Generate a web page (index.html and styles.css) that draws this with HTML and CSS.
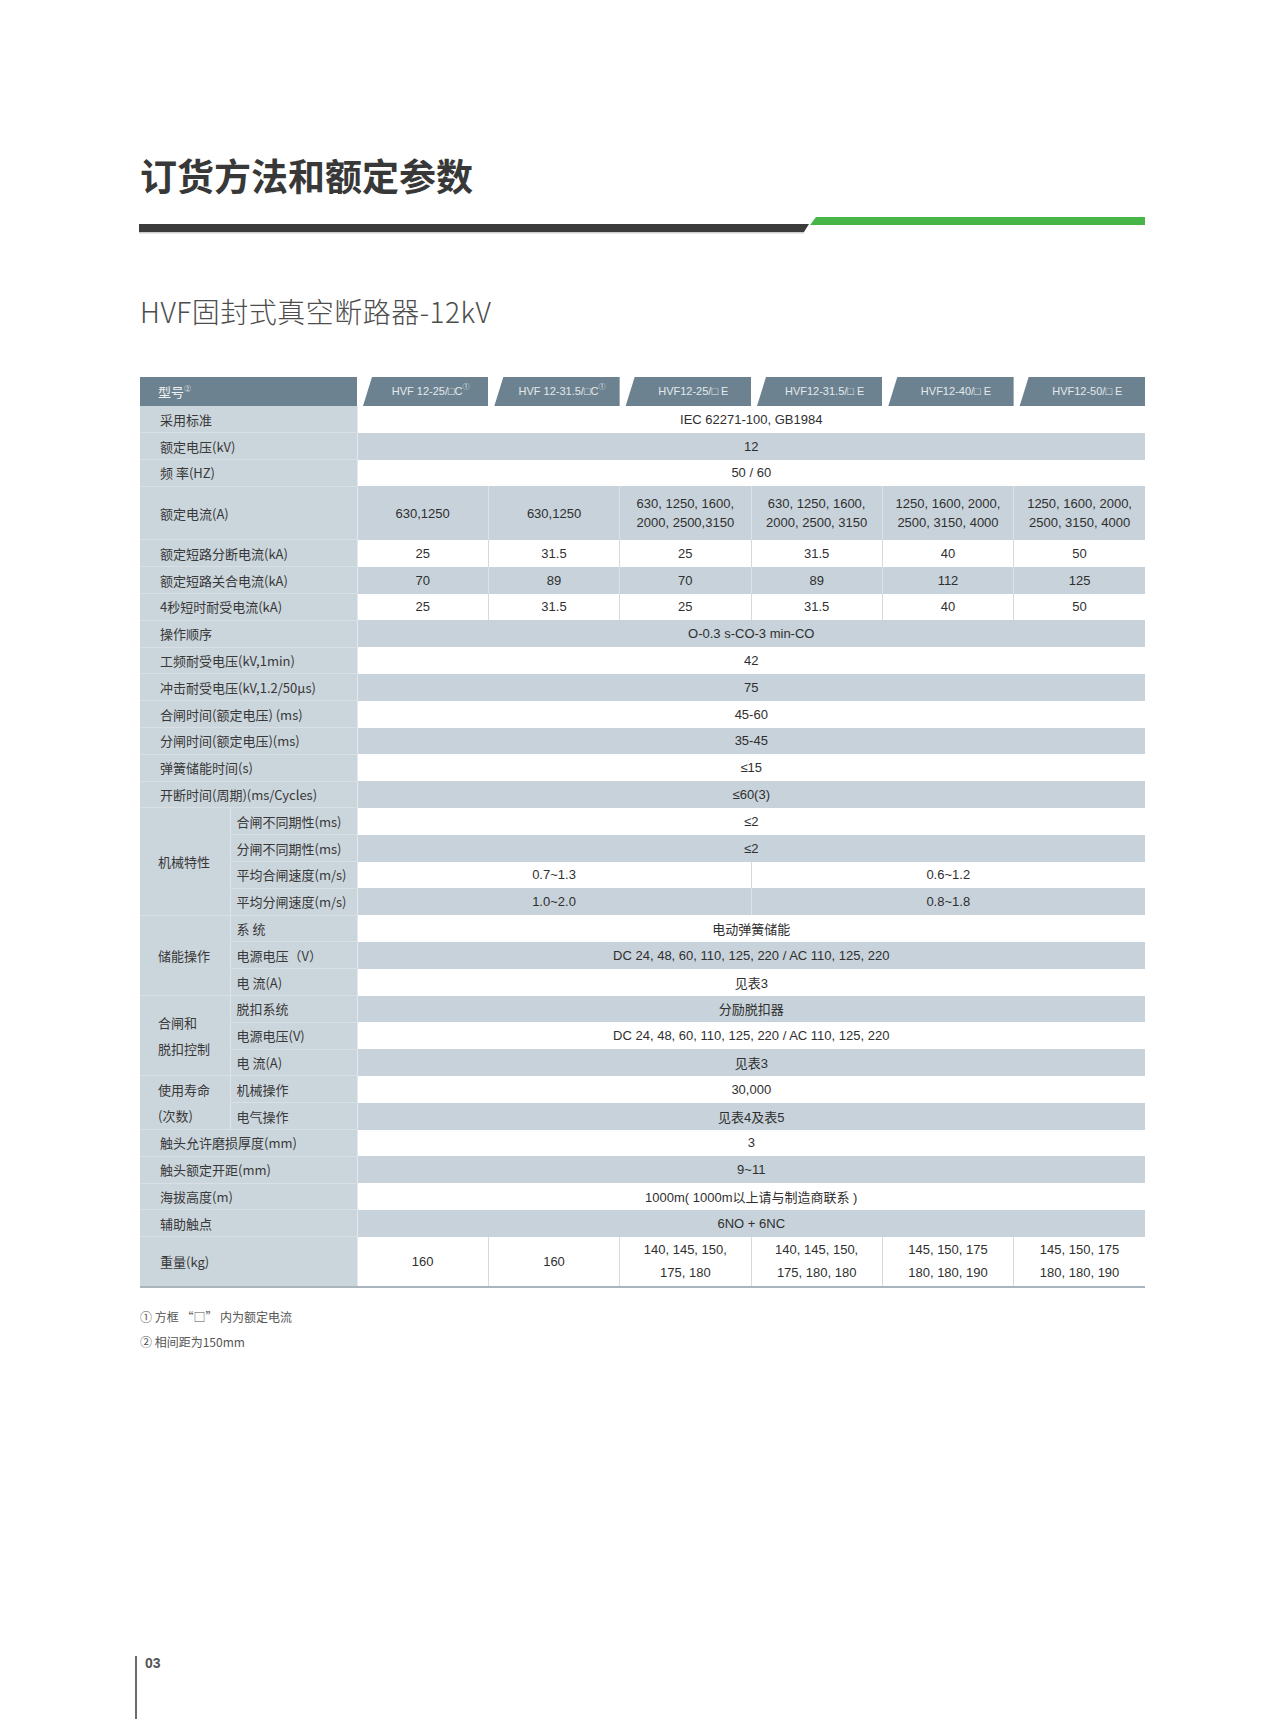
FILE: index.html
```html
<!DOCTYPE html>
<html lang="zh">
<head>
<meta charset="utf-8">
<title>订货方法和额定参数</title>
<link rel="stylesheet" href="styles.css">
</head>
<body>
<div class="page">
  <h1 class="title">订货方法和额定参数</h1>
  <svg class="rule" width="1006" height="22" viewBox="0 0 1006 22">
    <polygon points="0,11 670,11 665,19 0,19" fill="#3b3b3b"/>
    <rect x="0" y="19" width="665" height="1.5" fill="#cfcfcf"/>
    <polygon points="671,12 677,4 1006,4 1006,12" fill="#46b649"/>
  </svg>
  <h2 class="subtitle">HVF固封式真空断路器-12kV</h2>

  <div class="thead">
    <div class="th-label">型号<sup>②</sup></div>
    <div class="tab">HVF 12-25/□C<sup>①</sup></div>
    <div class="tab">HVF 12-31.5/□C<sup>①</sup></div>
    <div class="tab">HVF12-25/□ E</div>
    <div class="tab">HVF12-31.5/□ E</div>
    <div class="tab">HVF12-40/□ E</div>
    <div class="tab">HVF12-50/□ E</div>
  </div>

  <table class="spec">
    <colgroup>
      <col class="c-grp">
      <col class="c-sub">
      <col span="6" class="c-val">
    </colgroup>
    <tr class="w"><td class="lab" colspan="2">采用标准</td><td colspan="6">IEC 62271-100, GB1984</td></tr>
    <tr class="g"><td class="lab" colspan="2">额定电压(kV)</td><td colspan="6">12</td></tr>
    <tr class="w"><td class="lab" colspan="2">频 率(HZ)</td><td colspan="6">50 / 60</td></tr>
    <tr class="g dbl"><td class="lab" colspan="2">额定电流(A)</td>
      <td>630,1250</td><td class="sp">630,1250</td>
      <td class="sp two">630, 1250, 1600,<br>2000, 2500,3150</td>
      <td class="sp two">630, 1250, 1600,<br>2000, 2500, 3150</td>
      <td class="sp two">1250, 1600, 2000,<br>2500, 3150, 4000</td>
      <td class="sp two">1250, 1600, 2000,<br>2500, 3150, 4000</td></tr>
    <tr class="w"><td class="lab" colspan="2">额定短路分断电流(kA)</td>
      <td>25</td><td class="sp">31.5</td><td class="sp">25</td><td class="sp">31.5</td><td class="sp">40</td><td class="sp">50</td></tr>
    <tr class="g"><td class="lab" colspan="2">额定短路关合电流(kA)</td>
      <td>70</td><td class="sp">89</td><td class="sp">70</td><td class="sp">89</td><td class="sp">112</td><td class="sp">125</td></tr>
    <tr class="w"><td class="lab" colspan="2">4秒短时耐受电流(kA)</td>
      <td>25</td><td class="sp">31.5</td><td class="sp">25</td><td class="sp">31.5</td><td class="sp">40</td><td class="sp">50</td></tr>
    <tr class="g"><td class="lab" colspan="2">操作顺序</td><td colspan="6">O-0.3 s-CO-3 min-CO</td></tr>
    <tr class="w"><td class="lab" colspan="2">工频耐受电压(kV,1min)</td><td colspan="6">42</td></tr>
    <tr class="g"><td class="lab" colspan="2">冲击耐受电压(kV,1.2/50μs)</td><td colspan="6">75</td></tr>
    <tr class="w"><td class="lab" colspan="2">合闸时间(额定电压) (ms)</td><td colspan="6">45-60</td></tr>
    <tr class="g"><td class="lab" colspan="2">分闸时间(额定电压)(ms)</td><td colspan="6">35-45</td></tr>
    <tr class="w"><td class="lab" colspan="2">弹簧储能时间(s)</td><td colspan="6">≤15</td></tr>
    <tr class="g"><td class="lab" colspan="2">开断时间(周期)(ms/Cycles)</td><td colspan="6">≤60(3)</td></tr>

    <tr class="w"><td class="grp" rowspan="4">机械特性</td><td class="sub">合闸不同期性(ms)</td><td colspan="6">≤2</td></tr>
    <tr class="g"><td class="sub">分闸不同期性(ms)</td><td colspan="6">≤2</td></tr>
    <tr class="w"><td class="sub">平均合闸速度(m/s)</td><td colspan="3">0.7~1.3</td><td class="sp" colspan="3">0.6~1.2</td></tr>
    <tr class="g"><td class="sub">平均分闸速度(m/s)</td><td colspan="3">1.0~2.0</td><td class="sp" colspan="3">0.8~1.8</td></tr>

    <tr class="w"><td class="grp" rowspan="3">储能操作</td><td class="sub">系 统</td><td colspan="6">电动弹簧储能</td></tr>
    <tr class="g"><td class="sub">电源电压（V）</td><td colspan="6">DC 24, 48, 60, 110, 125, 220 / AC 110, 125, 220</td></tr>
    <tr class="w"><td class="sub">电 流(A)</td><td colspan="6">见表3</td></tr>

    <tr class="g"><td class="grp two-line" rowspan="3">合闸和<br>脱扣控制</td><td class="sub">脱扣系统</td><td colspan="6">分励脱扣器</td></tr>
    <tr class="w"><td class="sub">电源电压(V)</td><td colspan="6">DC 24, 48, 60, 110, 125, 220 / AC 110, 125, 220</td></tr>
    <tr class="g"><td class="sub">电 流(A)</td><td colspan="6">见表3</td></tr>

    <tr class="w"><td class="grp two-line" rowspan="2">使用寿命<br>(次数)</td><td class="sub">机械操作</td><td colspan="6">30,000</td></tr>
    <tr class="g"><td class="sub">电气操作</td><td colspan="6">见表4及表5</td></tr>

    <tr class="w"><td class="lab" colspan="2">触头允许磨损厚度(mm)</td><td colspan="6">3</td></tr>
    <tr class="g"><td class="lab" colspan="2">触头额定开距(mm)</td><td colspan="6">9~11</td></tr>
    <tr class="w"><td class="lab" colspan="2">海拔高度(m)</td><td colspan="6">1000m( 1000m以上请与制造商联系 )</td></tr>
    <tr class="g"><td class="lab" colspan="2">辅助触点</td><td colspan="6">6NO + 6NC</td></tr>
    <tr class="w wt"><td class="lab" colspan="2">重量(kg)</td>
      <td>160</td><td class="sp">160</td>
      <td class="sp two">140, 145, 150,<br>175, 180</td>
      <td class="sp two">140, 145, 150,<br>175, 180, 180</td>
      <td class="sp two">145, 150, 175<br>180, 180, 190</td>
      <td class="sp two">145, 150, 175<br>180, 180, 190</td></tr>
  </table>

  <div class="notes">
    <p>① 方框 “□” 内为额定电流</p>
    <p>② 相间距为150mm</p>
  </div>

  <div class="folio">03</div>
</div>
</body>
</html>
```

FILE: styles.css
```css
* { box-sizing: border-box; }

body {
  margin: 0;
  background: #ffffff;
  font-family: "Noto Sans CJK SC", "Noto Sans", sans-serif;
  color: #333333;
}

.page {
  width: 1276px;
  padding: 157px 131px 0 140px;
}

.title {
  margin: 0;
  font-size: 37px;
  line-height: 37px;
  font-weight: 700;
  color: #383838;
}

.rule {
  display: block;
  margin: 19px 0 0 -1px;
}

.subtitle {
  margin: 62px 0 0;
  font-size: 28px;
  line-height: 28px;
  font-weight: 300;
  letter-spacing: 0.5px;
  color: #4d4d4d;
}

/* header tabs */
.thead {
  display: flex;
  margin-top: 52px;
  height: 29px;
}

.th-label {
  width: 217px;
  flex: none;
  background: #6c8290;
  color: #eef2f4;
  font-size: 13px;
  line-height: 29px;
  padding-left: 18px;
}

.th-label sup,
.tab sup {
  font-size: 7px;
  line-height: 0;
  vertical-align: 6px;
}

.tab {
  flex: 1 1 0;
  background: #6c8290;
  color: #e3e9ec;
  font-family: "Liberation Sans", "Noto Sans CJK SC", sans-serif;
  font-size: 11px;
  line-height: 29px;
  text-align: center;
  padding-left: 16px;
  white-space: nowrap;
  clip-path: polygon(15px 0, 100% 0, 100% 100%, 6px 100%);
}

/* table */
.spec {
  width: 1005px;
  table-layout: fixed;
  border-collapse: collapse;
  border-bottom: 2px solid #a9b4bc;
}

.c-grp { width: 90px; }
.c-sub { width: 127px; }
.c-val { width: 131.33px; }

.spec tr { height: 26.8px; }
.spec tr.dbl { height: 53.6px; }
.spec tr.wt { height: 50px; }

.spec td {
  padding: 0;
  text-align: center;
  vertical-align: middle;
  font-family: "Liberation Sans", "Noto Sans CJK SC", sans-serif;
  font-size: 13px;
  color: #2f2f2f;
  white-space: nowrap;
}

.spec tr.w td { background: #ffffff; }
.spec tr.g td { background: #c7d2da; }

.spec tr.w td.sp { border-left: 1px solid #d3dae0; }
.spec tr.g td.sp { border-left: 1px solid #dce3e8; }

.spec td.two { line-height: 19px; }
.spec tr.wt td.two { line-height: 23px; }

.spec tr > td.lab,
.spec tr > td.sub,
.spec tr > td.grp {
  background: #cbd5dc;
  text-align: left;
  font-family: "Noto Sans CJK SC", "Noto Sans", sans-serif;
  font-size: 13px;
  color: #383838;
  border-bottom: 1px solid #d9e0e5;
}

.spec tr > td.lab { padding-left: 20px; border-right: 1px solid #e3e8ec; }
.spec tr > td.sub { padding-left: 6px; border-right: 1px solid #e3e8ec; }
.spec tr > td.grp { padding-left: 18px; border-right: 1px solid #dde3e8; }
.spec tr > td.two-line { line-height: 26px; }

/* notes */
.notes {
  margin-top: 16px;
}

.notes p {
  margin: 0;
  font-size: 12px;
  line-height: 25px;
  color: #555555;
}

/* page number */
.folio {
  margin: 302px 0 0 -5px;
  height: 63px;
  border-left: 2px solid #6a6a6a;
  padding-left: 8px;
  font-family: "Liberation Sans", sans-serif;
  font-size: 14px;
  font-weight: 700;
  line-height: 14px;
  color: #555555;
}
```
